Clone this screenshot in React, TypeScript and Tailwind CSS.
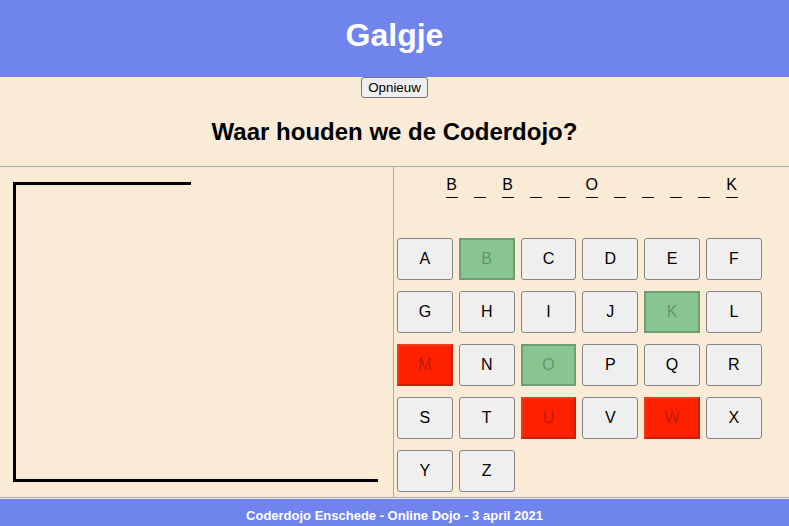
import React from "react";

const word = ["B", "", "B", "", "", "O", "", "", "", "", "K"];
const letters = "ABCDEFGHIJKLMNOPQRSTUVWXYZ".split("");
const correct = new Set(["B", "K", "O"]);
const wrong = new Set(["M", "U", "W"]);

export default function App() {
  return (
    <div className="min-h-[526px] bg-[#faebd7] text-black" style={{ fontFamily: '"Liberation Sans", Arial, sans-serif' }}>
      <header className="h-[77px] bg-[#7084ee] pt-[17px]">
        <h1 className="text-center text-[32px] font-bold leading-[36.8px] text-white">Galgje</h1>
      </header>
      <div className="flex justify-center">
        <button className="h-[21px] rounded-[3px] border border-[#767676] bg-[#efefef] px-[6px] text-[13.33px] leading-[15px] text-black">
          Opnieuw
        </button>
      </div>
      <h2 className="my-[20px] text-center text-[24px] font-bold leading-[27.6px]">Waar houden we de Coderdojo?</h2>
      <div className="flex border-y border-[#aaaaaa]">
        <div className="w-[394px] border-r border-[#aaaaaa]">
          <svg width="393" height="330" viewBox="0 0 393 330">
            <line x1="14.5" y1="16.5" x2="14.5" y2="313.5" stroke="#000" strokeWidth="3" />
            <line x1="13" y1="16.5" x2="191" y2="16.5" stroke="#000" strokeWidth="3" />
            <line x1="13" y1="313.5" x2="378" y2="313.5" stroke="#000" strokeWidth="3" />
          </svg>
        </div>
        <div className="flex-1 pt-[9px] pb-[5px]">
          <div className="flex h-[22px] justify-center">
            {word.map((l, i) => (
              <span key={i} className="mx-[8px] h-[22px] w-[12px] border-b border-black text-center text-[16px] leading-[18px]">
                {l}
              </span>
            ))}
          </div>
          <div className="mt-[40px] ml-[3px] grid grid-cols-[repeat(6,55.8px)] gap-x-[6px] gap-y-[11px]">
            {letters.map((l) => {
              const cls = correct.has(l)
                ? "border-2 border-[#6d9e74] bg-[#88c590] text-[rgba(16,16,16,0.3)]"
                : wrong.has(l)
                ? "border-2 border-[#ef3a1c] border-r-[#cc1f0c] border-b-[#cc1f0c] bg-[#ff2000] text-[rgba(16,16,16,0.3)]"
                : "rounded-[3px] border border-[#858585] bg-[#efefef] text-black";
              return (
                <button key={l} disabled={correct.has(l) || wrong.has(l)} className={`flex h-[42px] items-center justify-center text-[16px] ${cls}`}>
                  {l}
                </button>
              );
            })}
          </div>
        </div>
      </div>
      <footer className="mt-[1px] bg-[#7084ee] pt-[9px] pb-[8px] text-center text-[13px] font-bold leading-[15px] text-white">
        Coderdojo Enschede - Online Dojo - 3 april 2021
      </footer>
    </div>
  );
}
